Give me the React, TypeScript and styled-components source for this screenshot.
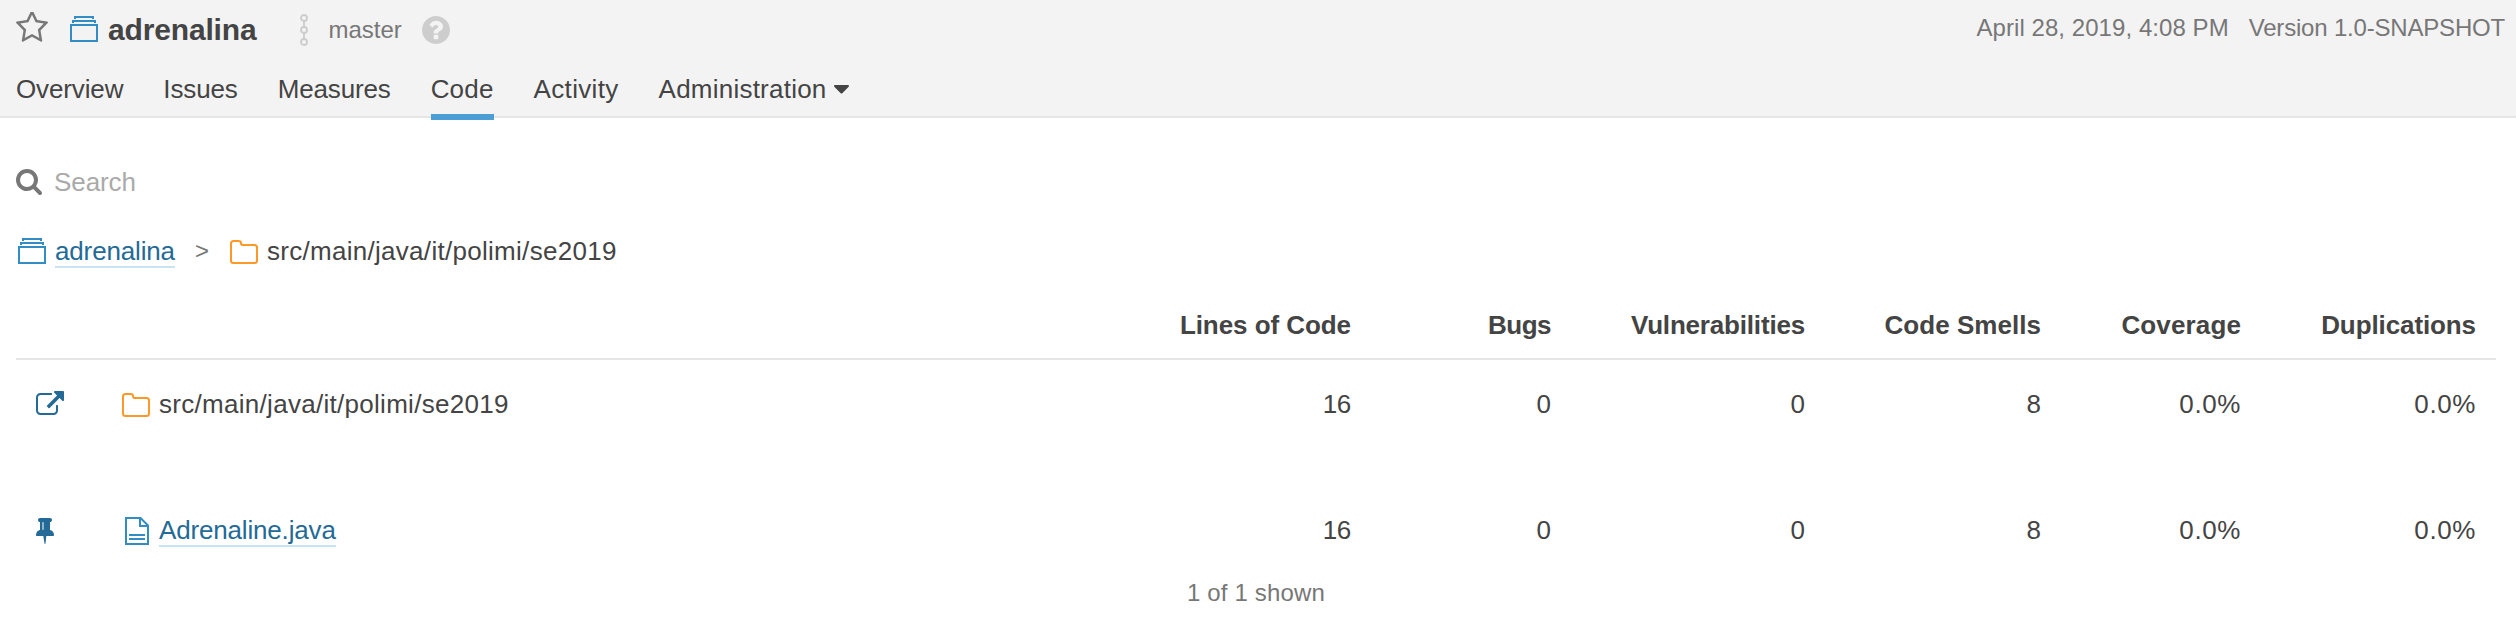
import React from "react";
import styled, { createGlobalStyle } from "styled-components";

const color = {
  text: "#444",
  secondary: "#777",
  muted: "#cdcdcd",
  placeholder: "#aaa",
  link: "#236a97",
  linkBorder: "#cae3f2",
  blue: "#4b9fd5",
  iconBlue: "#328dc5",
  orange: "#fe9826",
  barBackground: "#f3f3f3",
  border: "#e6e6e6",
};

const GlobalStyle = createGlobalStyle`
  body {
    margin: 0;
    background: #fff;
    color: ${color.text};
    font: 26px/30px "Liberation Sans", Arial, sans-serif;
  }
  svg {
    display: block;
    flex: none;
  }
`;

const Text = styled.span<{ $track?: number }>`
  letter-spacing: ${(p) => p.$track ?? 0}px;
  white-space: pre;
`;

const Header = styled.header`
  box-sizing: border-box;
  height: 118px;
  padding: 10px 11px 0 16px;
  background: ${color.barBackground};
  border-bottom: 2px solid ${color.border};
`;

const HeaderTop = styled.div`
  display: flex;
  justify-content: space-between;
  height: 40px;
`;

const Project = styled.div`
  display: flex;
  align-items: center;
  line-height: 40px;
`;

const StarButton = styled.span`
  margin: 0 20px 6px 0;
`;

const ProjectName = styled(Text)`
  margin: 0 44px 0 8px;
  font-size: 30px;
  font-weight: 700;
`;

const BranchName = styled(Text)`
  margin: 0 20px;
  font-size: 24px;
  color: ${color.secondary};
`;

const Analysis = styled.div`
  display: flex;
  gap: 20px;
  font-size: 24px;
  line-height: 35px;
  color: ${color.secondary};
`;

const Nav = styled.nav`
  display: flex;
  gap: 40px;
  margin-top: 19px;
`;

const Tab = styled.a<{ $active?: boolean }>`
  display: flex;
  align-items: center;
  gap: 7px;
  padding-bottom: 5px;
  line-height: 40px;
  border-bottom: 6px solid ${(p) => (p.$active ? color.blue : "transparent")};
`;

const Main = styled.main`
  padding: 44px 20px 0 16px;
`;

const SearchBox = styled.div`
  display: flex;
  align-items: center;
  gap: 12px;
  height: 40px;
  line-height: 40px;
  color: ${color.placeholder};
`;

const Breadcrumbs = styled.div`
  display: flex;
  align-items: flex-start;
  height: 32px;
  margin: 34px 0 37px;
`;

const Separator = styled.span`
  width: 33px;
  margin-left: 20px;
  font-size: 24px;
  line-height: 30px;
  color: ${color.secondary};
`;

const Component = styled.div`
  display: flex;
  align-items: flex-start;
  gap: 7px;
`;

const Link = styled(Text)`
  color: ${color.link};
  border-bottom: 2px solid ${color.linkBorder};
`;

const Row = styled.div`
  box-sizing: border-box;
  display: grid;
  grid-template-columns: 104px 1fr 200px 200px 254px 236px 200px 235px;
  height: 86px;
  padding: 29px 20px 0 0;
`;

const HeadRow = styled(Row).attrs({ as: "header" })`
  height: 55px;
  padding-top: 0;
  border-bottom: 2px solid ${color.border};
  font-weight: 700;
  line-height: 40px;
`;

const Rows = styled.div`
  display: grid;
  gap: 40px;
`;

const Value = styled(Text)`
  text-align: right;
`;

const Action = styled.div<{ $top: number }>`
  padding: ${(p) => p.$top}px 0 0 20px;
`;

const Footer = styled.footer`
  font-size: 24px;
  line-height: 40px;
  padding-top: 1px;
  text-align: center;
  color: ${color.secondary};
`;

const StarIcon = () => (
  <svg width="32" height="30" viewBox="64 128 1664 1500" preserveAspectRatio="none" fill={color.secondary}>
    <path d="M1201 1004l306-297-422-62-189-382-189 382-422 62 306 297-73 421 378-199 377 199zm527-357q0 22-26 48l-363 354 86 500q1 7 1 20 0 50-41 50-19 0-40-12l-449-236-449 236q-22 12-40 12-21 0-31.5-14.5t-10.5-35.5q0-6 2-20l86-500-364-354q-25-27-25-48 0-37 56-46l502-73 225-455q19-41 49-41t49 41l225 455 502 73q56 9 56 46z" />
  </svg>
);

const ProjectIcon = () => (
  <svg width="32" height="32" viewBox="0 0 16 16" fill={color.iconBlue}>
    <path d="M15 14H1V5h14v9zM2 6v7h12V6H2zM3 4.5H2V3h12v1.5h-1V4H3v.5zM4 2.5H3V1h10v1.5h-1V2H4v.5z" />
  </svg>
);

const BranchIcon = () => (
  <svg width="8" height="32" viewBox="0 0 8 32" fill="none" stroke={color.muted} strokeWidth="1.9">
    <circle cx="4" cy="4" r="3" />
    <circle cx="4" cy="16" r="3" />
    <circle cx="4" cy="28" r="3" />
    <path d="M4 7v6M4 19v6" />
  </svg>
);

const HelpIcon = () => (
  <svg width="28" height="28" viewBox="128 128 1536 1536" fill={color.muted}>
    <path d="M1024 1376v-192q0-14-9-23t-23-9h-192q-14 0-23 9t-9 23v192q0 14 9 23t23 9h192q14 0 23-9t9-23zm256-672q0-88-55.5-163t-138.5-116-170-41q-243 0-371 213-15 24 8 42l132 100q7 6 19 6 16 0 25-12 53-68 86-92 34-24 86-24 48 0 85.5 26t37.5 59q0 38-20 61t-68 45q-63 28-115.5 86.5t-52.5 125.5v36q0 14 9 23t23 9h192q14 0 23-9t9-23q0-19 21.5-49.5t54.5-49.5q32-18 49-28.5t46-35 44.5-48 28-60.5 12.5-81zm384 192q0 209-103 385.5t-279.5 279.5-385.5 103-385.5-103-279.5-279.5-103-385.5 103-385.5 279.5-279.5 385.5-103 385.5 103 279.5 279.5 103 385.5z" />
  </svg>
);

const CaretIcon = () => (
  <svg width="15" height="9" viewBox="0 0 15 9" fill={color.text}>
    <path d="M1 0h13q1 0 1 1 0 .4-.3.7l-6.4 6.5q-.8.8-1.6 0L.3 1.7Q0 1.4 0 1 0 0 1 0z" />
  </svg>
);

const SearchIcon = () => (
  <svg width="26" height="26" viewBox="64 128 1664 1664" fill={color.secondary}>
    <path d="M1216 832q0-185-131.5-316.5t-316.5-131.5-316.5 131.5-131.5 316.5 131.5 316.5 316.5 131.5 316.5-131.5 131.5-316.5zm512 832q0 52-38 90t-90 38q-54 0-90-38l-343-342q-179 124-399 124-143 0-273.5-55.5t-225-150-150-225-55.5-273.5 55.5-273.5 150-225 225-150 273.5-55.5 273.5 55.5 225 150 150 225 55.5 273.5q0 220-124 399l343 343q37 37 37 90z" />
  </svg>
);

const FolderIcon = () => (
  <svg width="32" height="32" viewBox="0 0 32 32" fill="none" stroke={color.orange} strokeWidth="2">
    <path d="M3 7.5Q3 5 5.5 5H10.5Q13 5 13 7.2Q13 9 15 9H26.5Q29 9 29 11.5V24.5Q29 27 26.5 27H5.5Q3 27 3 24.5z" />
  </svg>
);

const FileIcon = () => (
  <svg width="32" height="32" viewBox="0 0 32 32" fill="none" stroke={color.iconBlue} strokeWidth="2">
    <path d="M6 3H20.5L28 10.5V29H6zM20 3V11H28M9 20H25M9 24H25" />
  </svg>
);

const OpenIcon = () => (
  <svg width="28" height="24" viewBox="0 0 1792 1536" fill={color.link}>
    <path d="M1408 928v320q0 119-84.5 203.5t-203.5 84.5h-832q-119 0-203.5-84.5t-84.5-203.5v-832q0-119 84.5-203.5t203.5-84.5h704q14 0 23 9t9 23v64q0 14-9 23t-23 9h-704q-66 0-113 47t-47 113v832q0 66 47 113t113 47h832q66 0 113-47t47-113v-320q0-14 9-23t23-9h64q14 0 23 9t9 23zm384-864v512q0 26-19 45t-45 19-45-19l-176-176-652 652q-10 10-23 10t-23-10l-114-114q-10-10-10-23t10-23l652-652-176-176q-19-19-19-45t19-45 45-19h512q26 0 45 19t19 45z" />
  </svg>
);

const PinIcon = () => (
  <svg width="18" height="26" viewBox="320 128 1152 1664" fill={color.link}>
    <path d="M800 864v-448q0-14-9-23t-23-9-23 9-9 23v448q0 14 9 23t23 9 23-9 9-23zm672 352q0 26-19 45t-45 19h-429l-51 483q-2 12-10.5 20.5t-20.5 8.5h-1q-27 0-32-27l-76-485h-404q-26 0-45-19t-19-45q0-123 78.5-221.5t177.5-98.5v-512q-52 0-90-38t-38-90 38-90 90-38h640q52 0 90 38t38 90-38 90-90 38v512q99 0 177.5 98.5t78.5 221.5z" />
  </svg>
);

const tabs = [
  { label: "Overview", track: -0.125 },
  { label: "Issues", track: -0.13 },
  { label: "Measures", track: -0.16 },
  { label: "Code", track: 0.2, active: true },
  { label: "Activity", track: 0.33 },
  { label: "Administration", track: 0.23, menu: true },
];

const metrics = [
  { label: "Lines of Code", track: -0.06, value: "16", valueTrack: -0.3 },
  { label: "Bugs", track: -0.5, value: "0" },
  { label: "Vulnerabilities", track: -0.18, value: "0" },
  { label: "Code Smells", track: 0.04, value: "8" },
  { label: "Coverage", track: 0.13, value: "0.0%", valueTrack: 0.6 },
  { label: "Duplications", track: -0.1, value: "0.0%", valueTrack: 0.6 },
];

const Values = () => (
  <>
    {metrics.map((m) => (
      <Value key={m.label} $track={m.valueTrack}>{m.value}</Value>
    ))}
  </>
);

const directory = "src/main/java/it/polimi/se2019";

export default function App() {
  return (
    <>
      <GlobalStyle />
      <Header>
        <HeaderTop>
          <Project>
            <StarButton><StarIcon /></StarButton>
            <ProjectIcon />
            <ProjectName $track={-0.16}>adrenalina</ProjectName>
            <BranchIcon />
            <BranchName>master</BranchName>
            <HelpIcon />
          </Project>
          <Analysis>
            <Text $track={0.06}>April 28, 2019, 4:08 PM</Text>
            <Text $track={-0.19}>Version 1.0-SNAPSHOT</Text>
          </Analysis>
        </HeaderTop>
        <Nav>
          {tabs.map((t) => (
            <Tab key={t.label} $active={t.active}>
              <Text $track={t.track}>{t.label}</Text>
              {t.menu && <CaretIcon />}
            </Tab>
          ))}
        </Nav>
      </Header>
      <Main>
        <SearchBox>
          <SearchIcon />
          <Text $track={-0.08}>Search</Text>
        </SearchBox>
        <Breadcrumbs>
          <Component>
            <ProjectIcon />
            <Link $track={-0.15}>adrenalina</Link>
          </Component>
          <Separator>&gt;</Separator>
          <Component>
            <FolderIcon />
            <Text $track={0.29}>{directory}</Text>
          </Component>
        </Breadcrumbs>
        <HeadRow>
          <span />
          <span />
          {metrics.map((m) => (
            <Value key={m.label} $track={m.track}>{m.label}</Value>
          ))}
        </HeadRow>
        <Rows>
          <Row>
            <Action $top={2}><OpenIcon /></Action>
            <Component>
              <FolderIcon />
              <Text $track={0.29}>{directory}</Text>
            </Component>
            <Values />
          </Row>
          <Row>
            <Action $top={3}><PinIcon /></Action>
            <Component>
              <FileIcon />
              <Link $track={-0.17}>Adrenaline.java</Link>
            </Component>
            <Values />
          </Row>
        </Rows>
        <Footer><Text $track={0.18}>1 of 1 shown</Text></Footer>
      </Main>
    </>
  );
}
